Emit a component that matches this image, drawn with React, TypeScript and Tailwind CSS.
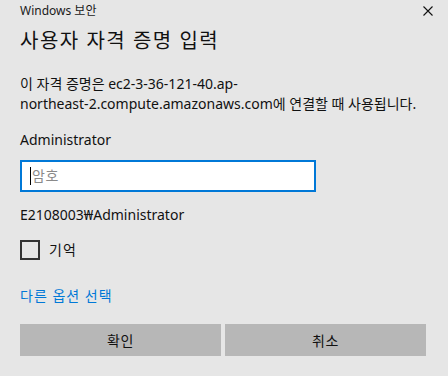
import React from "react";

export default function App() {
  const font = { fontFamily: '"Segoe UI", "Noto Sans", "Noto Sans CJK KR", sans-serif' };
  return (
    <div className="w-[448px] h-[376px] bg-[#e6e6e6] text-[#000] relative overflow-hidden" style={font}>
      <div className="pl-[20px] pr-[20px]">
        <div className="pt-[1px] h-[22px] text-[12px] leading-[20px] text-[#1a1a1a]">Windows 보안</div>
        <div className="mt-[5px] text-[20px] leading-[28px] tracking-[1.5px] text-[#111]">사용자 자격 증명 입력</div>
        <div className="mt-[19px] text-[14px] leading-[20px] text-[#111]">
          이 자격 증명은 ec2-3-36-121-40.ap-
          <br />
          northeast-2.compute.amazonaws.com에 연결할 때 사용됩니다.
        </div>
        <div className="mt-[16px] text-[14px] leading-[20px] text-[#111]">Administrator</div>
        <div className="mt-[10px] w-[296px] h-[32px] border-2 border-[#0078d7] bg-white flex items-center pl-[8px]">
          <div className="w-[1px] h-[18px] bg-black" />
          <span className="ml-[1px] text-[14px] text-[#8a8a8a] leading-[20px] tracking-[0.5px]">암호</span>
        </div>
        <div className="mt-[13px] text-[14px] leading-[20px] text-[#111]">E2108003₩Administrator</div>
        <div className="mt-[15px] flex items-center h-[20px]">
          <div className="w-[20px] h-[20px] border-2 border-[#333]" />
          <span className="ml-[9px] text-[14px] leading-[20px] tracking-[1px] text-[#111]">기억</span>
        </div>
        <div className="mt-[26px] text-[14px] leading-[20px] tracking-[1px] text-[#0078d7]">다른 옵션 선택</div>
        <div className="mt-[18px] flex gap-[4px]">
          <div className="w-[201px] h-[32px] bg-[#b7b7b7] flex items-center justify-center text-[14px] tracking-[0.5px] text-[#111]">확인</div>
          <div className="w-[201px] h-[32px] bg-[#b7b7b7] flex items-center justify-center text-[14px] tracking-[0.5px] text-[#111]">취소</div>
        </div>
      </div>
      <svg className="absolute left-[423px] top-[6px]" width="10" height="10" viewBox="0 0 10 10">
        <path d="M0.5 0.5 L9.5 9.5 M9.5 0.5 L0.5 9.5" stroke="#111" strokeWidth="1.1" />
      </svg>
    </div>
  );
}
